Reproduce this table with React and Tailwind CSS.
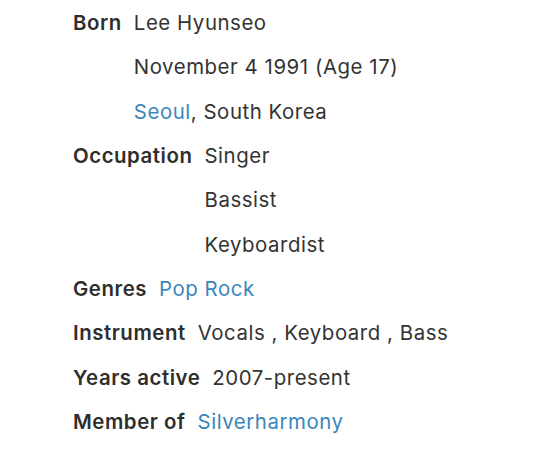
export default function App() {
  const link = "text-[#3a86bb]";
  const rows = [
    { label: "Born", values: [<>Lee Hyunseo</>, <>November 4 1991 (Age 17)</>, <><span className={link}>Seoul</span>, South Korea</>] },
    { label: "Occupation", values: [<>Singer</>, <>Bassist</>, <>Keyboardist</>] },
    { label: "Genres", values: [<span className={link}>Pop Rock</span>] },
    { label: "Instrument", values: [<>Vocals , Keyboard , Bass</>] },
    { label: "Years active", values: [<>2007-present</>] },
    { label: "Member of", values: [<span className={link}>Silverharmony</span>] },
  ];
  return (
    <div className="w-[540px] h-[451px] bg-white pl-[73px] pt-[1px] text-[20.4px] leading-[44.33px] tracking-[0.55px] text-[#333333]" style={{ fontFamily: "Inter, 'Noto Sans', sans-serif" }}>
      {rows.map((r) => (
        <div key={r.label} className="flex gap-[12px]">
          <div className="font-semibold text-[#2e2e2e]">{r.label}</div>
          <div className="flex flex-col">
            {r.values.map((v, i) => (
              <div key={i}>{v}</div>
            ))}
          </div>
        </div>
      ))}
    </div>
  );
}
